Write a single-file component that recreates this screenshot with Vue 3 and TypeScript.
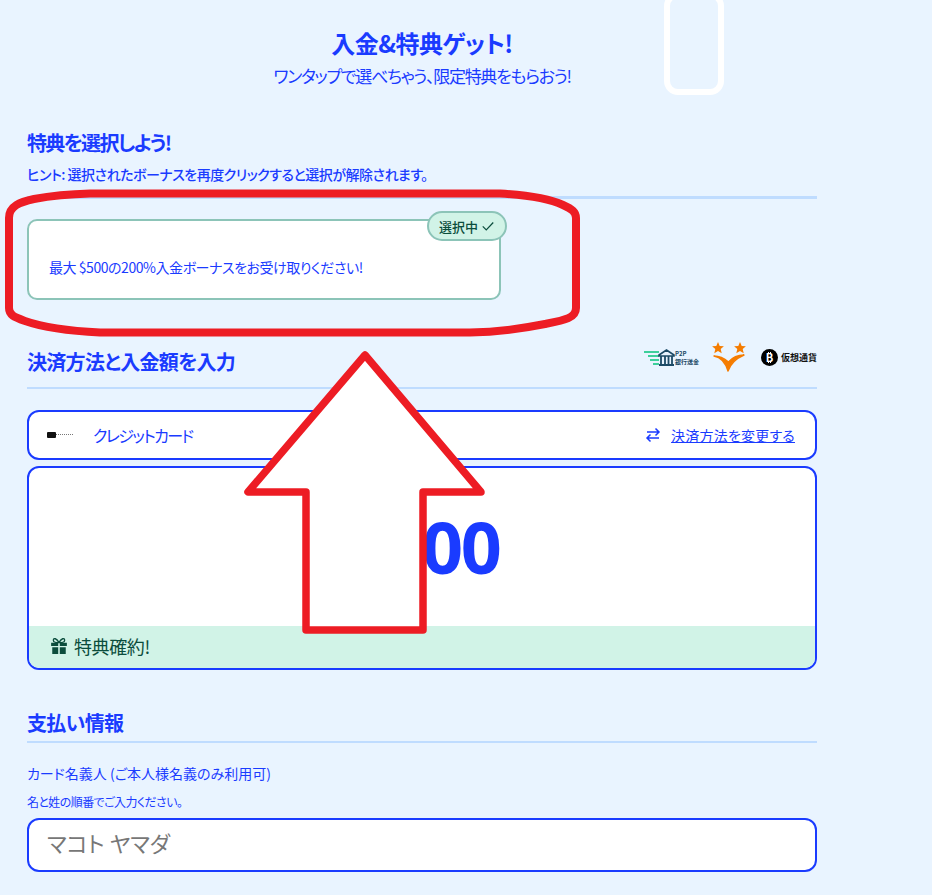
<template>
  <div class="page">
    <div class="phone-deco"></div>

    <header class="head">
      <h1>入金&amp;特典ゲット!</h1>
      <p>ワンタップで選べちゃう、限定特典をもらおう!</p>
    </header>

    <section class="bonus">
      <h2 class="tight">特典を選択しよう!</h2>
      <p class="hint">ヒント: 選択されたボーナスを再度クリックすると選択が解除されます。</p>
      <div class="rule"></div>
      <div class="bonus-card">
        <span class="badge">
          選択中
          <svg width="14" height="14" viewBox="0 0 16 16" fill="none" stroke="#0b4d3c" stroke-width="1.4">
            <path d="M2 8.5 6 12.5 14 4" />
          </svg>
        </span>
        最大 $500の200%入金ボーナスをお受け取りください!
      </div>
    </section>

    <section class="method">
      <div class="method-head">
        <h2>決済方法と入金額を入力</h2>
        <div class="logos">
          <svg width="56" height="18" viewBox="0 0 56 18">
            <g fill="#3ecf9b">
              <rect x="0" y="3" width="15" height="2" />
              <rect x="4" y="7" width="11" height="2" />
              <rect x="6" y="11" width="9" height="2" />
              <rect x="9" y="15" width="6" height="2" />
            </g>
            <path d="M15 7 22.500 2 30 7v1H15z" fill="none" stroke="#1c4a66" stroke-width="1.600" />
            <path d="M17 8v8M21 8v8M24.500 8v8M28 8v8M15 17h15" stroke="#1c4a66" stroke-width="1.800" fill="none" />
            <text x="31" y="8" font-size="6" font-weight="700" fill="#1c4a66">P2P</text>
            <text x="31" y="16" font-size="6" font-weight="700" fill="#1c4a66">銀行送金</text>
          </svg>
          <svg width="34" height="30" viewBox="0 0 34 30">
            <path
              d="M6 0l1.700 3.900 4.200.4-3.200 2.800 1 4.100L6 9.100l-3.700 2.100 1-4.100L.1 4.300l4.200-.4zM28 0l1.700 3.900 4.200.4-3.200 2.800 1 4.100L28 9.100l-3.700 2.100 1-4.100-3.200-2.800 4.200-.4z"
              fill="#f57c00"
            />
            <path d="M2 14c6 1 11 5 14 15 3-9 9-13 16-16-7 0-12 3-15.500 7C13 17 8 14 2 14z" fill="#f57c00" stroke="#f57c00" stroke-width="1.400" stroke-linejoin="round" />
          </svg>
          <span class="crypto">
            <svg width="17" height="17" viewBox="0 0 17 17">
              <circle cx="8.500" cy="8.500" r="8.500" fill="#000" />
              <path d="M7.500 3v2M9.500 3v2M7.500 12v2M9.500 12v2" stroke="#fff" stroke-width="1" />
              <text x="8.500" y="12.500" font-size="11" font-weight="700" fill="#fff" text-anchor="middle">B</text>
            </svg>
            仮想通貨
          </span>
        </div>
      </div>
      <div class="rule"></div>

      <div class="pay-row">
        <div class="pay-left">
          <span class="card-mark"><i></i><b></b></span>
          クレジットカード
        </div>
        <div class="pay-right">
          <svg width="16" height="16" viewBox="0 0 16 16" fill="none" stroke="#1a3bff" stroke-width="1.500">
            <path d="M2 5h12M10.500 1.500 14 5l-3.500 3.500M14 11H2M5.500 7.500 2 11l3.500 3.500" />
          </svg>
          <a>決済方法を変更する</a>
        </div>
      </div>

      <div class="amount-box">
        <div class="amount">$500</div>
        <div class="perk">
          <svg width="18" height="18" viewBox="0 0 16 16" fill="#0b4d3c">
            <path d="M1 5h6.300v3H1zM8.700 5H15v3H8.700zM2 9h5.300v6H2zM8.700 9H14v6H8.700z" />
            <path d="M8 5C6 1 3 .5 3 3c0 1.500 2.500 2 5 2zm0 0c2-4 5-4.500 5-2 0 1.500-2.500 2-5 2z" fill="none" stroke="#0b4d3c" stroke-width="1.200" />
          </svg>
          特典確約!
        </div>
      </div>
    </section>

    <section class="info">
      <h2>支払い情報</h2>
      <div class="rule"></div>
      <label>カード名義人 (ご本人様名義のみ利用可)</label>
      <p class="sub">名と姓の順番でご入力ください。</p>
      <input class="name-input" placeholder="マコト ヤマダ" />
    </section>

    <svg class="marks" width="932" height="895" viewBox="0 0 932 895">
      <path
        d="M9 218C9 206 20 202 34 199 50 196 70 194 90 193.500H500C525 195 550 199 563 205 572 209 576 212 576 218V308C576 318 565 320 545 324 525 328 500 332 470 332.500H100C70 331 45 328 25 321 14 317 9 315 9 308Z"
        fill="none"
        stroke="#ed1c24"
        stroke-width="8"
      />
      <path
        d="M365 355 248 492H306V630H423V492H481Z"
        fill="#fff"
        stroke="#ed1c24"
        stroke-width="7.500"
        stroke-linejoin="round"
      />
    </svg>
  </div>
</template>

<script setup lang="ts">
</script>

<style>
html,
body {
  background: #e9f4ff;
}
</style>

<style scoped>
.page {
  position: relative;
  width: 932px;
  height: 895px;
  overflow: hidden;
  box-sizing: border-box;
  padding: 27px 115px 0 27px;
  background: #e9f4ff;
  color: #1a3bff;
  font-family: "Noto Sans CJK JP", "Noto Sans", sans-serif;
  font-feature-settings: "palt";
}

.phone-deco {
  position: absolute;
  left: 664px;
  top: -8px;
  width: 60px;
  height: 103px;
  box-sizing: border-box;
  border: 6px solid #fff;
  border-radius: 14px;
}

.head {
  height: 69px;
  text-align: center;
}

.head h1 {
  margin: 0;
  font-size: 24px;
  line-height: 32px;
  font-weight: 700;
  letter-spacing: -0.5px;
}

.head p {
  margin: 4px 0 0;
  font-size: 17px;
  line-height: 26px;
  font-weight: 400;
  letter-spacing: -1.3px;
}

h2 {
  margin: 0;
  font-size: 20px;
  line-height: 28px;
  font-weight: 700;
  letter-spacing: -0.7px;
}

h2.tight {
  letter-spacing: -1.7px;
}

.bonus {
  margin-top: 33px;
}

.hint {
  margin: 7px 0 0;
  font-size: 14px;
  line-height: 20px;
  font-weight: 500;
  letter-spacing: -0.5px;
}

.rule {
  height: 3px;
  margin-top: 12px;
  background: #bfdcff;
}

.bonus-card {
  position: relative;
  box-sizing: border-box;
  display: flex;
  align-items: center;
  width: 474px;
  height: 81px;
  margin-top: 20px;
  padding: 14px 20px 0;
  background: #fff;
  border: 2px solid #8cc4b8;
  border-radius: 10px;
  font-size: 14px;
  letter-spacing: -0.45px;
}

.badge {
  position: absolute;
  right: -8px;
  top: -10px;
  display: flex;
  align-items: center;
  gap: 3px;
  box-sizing: border-box;
  height: 30px;
  padding: 0 10px;
  background: #d1f3e7;
  border: 2px solid #8cc4b8;
  border-radius: 15px;
  color: #0b4d3c;
  font-size: 13px;
  font-weight: 500;
  letter-spacing: 0;
}

.method {
  margin-top: 48px;
}

.method-head {
  display: flex;
  align-items: center;
  justify-content: space-between;
  height: 28px;
}

.method .rule {
  margin-top: 11px;
  height: 2px;
}

.logos {
  display: flex;
  align-items: center;
  gap: 12px;
  margin-top: -10px;
}

.crypto {
  display: flex;
  align-items: center;
  gap: 3px;
  margin-left: 3px;
  color: #111;
  font-size: 9px;
  font-weight: 700;
}

.pay-row {
  display: flex;
  align-items: center;
  justify-content: space-between;
  box-sizing: border-box;
  height: 50px;
  margin-top: 21px;
  padding: 0 20px 1px 18px;
  background: #fff;
  border: 2px solid #1a3bff;
  border-radius: 12px;
}

.pay-left {
  display: flex;
  align-items: center;
  font-size: 16px;
  font-weight: 400;
  letter-spacing: -1.6px;
}

.card-mark {
  display: flex;
  align-items: center;
  width: 46px;
}

.card-mark i {
  width: 9px;
  height: 6px;
  background: #111;
  border-radius: 1px;
}

.card-mark b {
  width: 17px;
  height: 0;
  border-top: 1px dotted #777;
}

.pay-right {
  display: flex;
  align-items: center;
  gap: 10px;
  font-size: 14px;
  letter-spacing: 0.2px;
}

.pay-right a {
  text-decoration: underline;
}

.amount-box {
  box-sizing: border-box;
  height: 204px;
  margin-top: 6px;
  background: #fff;
  border: 2px solid #1a3bff;
  border-radius: 12px;
  overflow: hidden;
  display: flex;
  flex-direction: column;
}

.amount {
  flex: 1;
  display: flex;
  align-items: center;
  justify-content: center;
  padding-bottom: 3px;
  font-family: "Noto Sans", sans-serif;
  font-size: 72px;
  font-weight: 700;
  letter-spacing: -2.5px;
}

.perk {
  display: flex;
  align-items: center;
  gap: 6px;
  box-sizing: border-box;
  height: 42px;
  padding: 0 0 3px 21px;
  background: #d1f3e7;
  color: #0b4d3c;
  font-size: 18px;
  font-weight: 400;
  letter-spacing: -0.4px;
}

.info {
  margin-top: 39px;
}

.info .rule {
  margin-top: 4px;
  height: 2px;
}

label {
  display: block;
  margin: 20px 0 0;
  font-size: 14px;
  line-height: 20px;
}

.sub {
  margin: 11px 0 0;
  font-size: 12px;
  line-height: 16px;
  letter-spacing: -0.6px;
}

.name-input {
  display: block;
  box-sizing: border-box;
  width: 100%;
  height: 54px;
  margin-top: 8px;
  padding: 0 18px 7px;
  background: #fff;
  border: 2px solid #1a3bff;
  border-radius: 12px;
  font-family: inherit;
  font-feature-settings: "palt";
  font-size: 22px;
  outline: none;
}

.name-input::placeholder {
  color: #777;
  opacity: 1;
}

.marks {
  position: absolute;
  left: 0;
  top: 0;
  pointer-events: none;
}
</style>
